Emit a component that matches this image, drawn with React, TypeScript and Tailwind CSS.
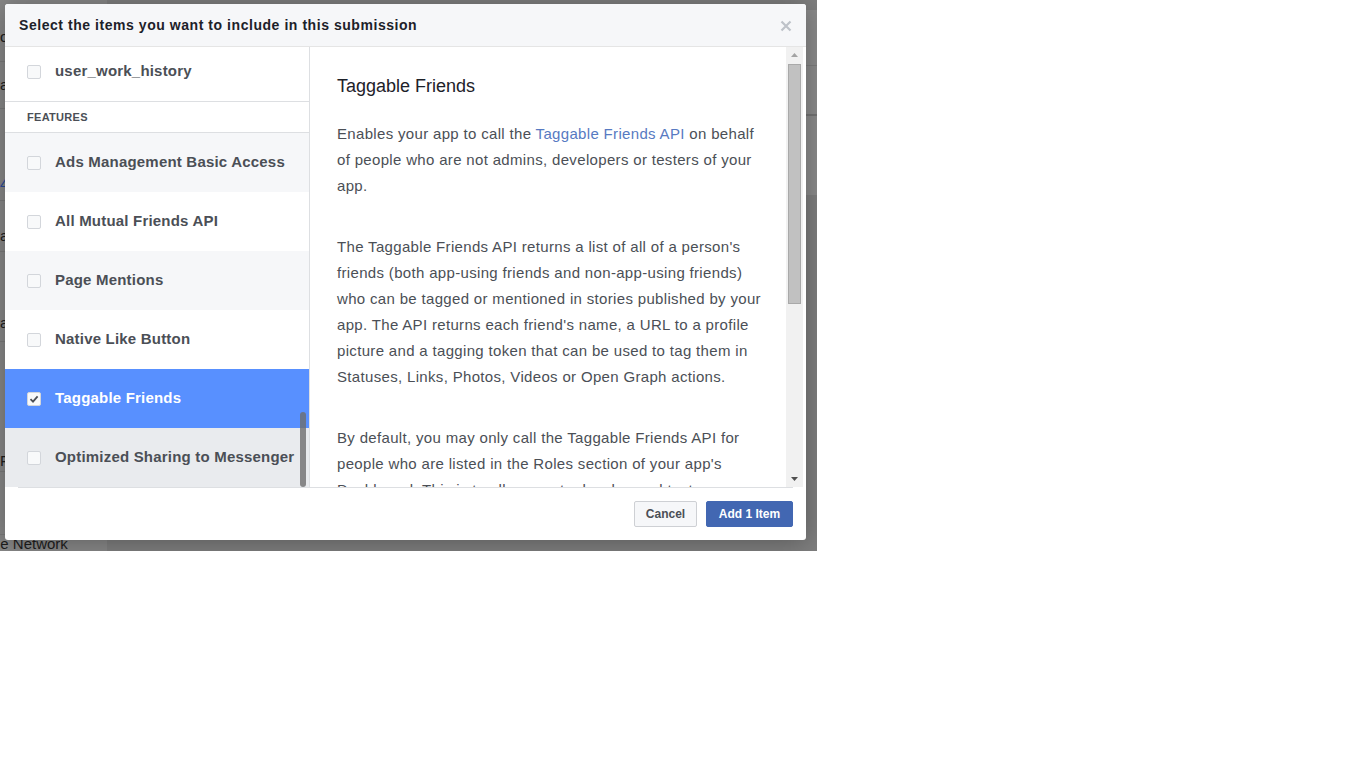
const features = [
  { name: 'Ads Management Basic Access', tone: 'bg-[#f6f7f9]' },
  { name: 'All Mutual Friends API', tone: 'bg-white' },
  { name: 'Page Mentions', tone: 'bg-[#f6f7f9]' },
  { name: 'Native Like Button', tone: 'bg-white' },
  { name: 'Taggable Friends', tone: 'bg-[#5890ff]', checked: true },
  { name: 'Optimized Sharing to Messenger', tone: 'bg-[#e9ebee]' },
]

function Checkbox({ checked }: { checked?: boolean }) {
  return (
    <span className="flex h-[14px] w-[14px] shrink-0 items-center justify-center rounded-[2px] border border-[#d3d6db] bg-[#f8f9fa]">
      {checked && (
        <svg width="10" height="10" viewBox="0 0 10 10">
          <path d="M1.5 5.2 L4 7.6 L8.6 2.4" fill="none" stroke="#4b4f56" strokeWidth="1.8" />
        </svg>
      )}
    </span>
  )
}

function Row({ name, tone, checked }: { name: string; tone: string; checked?: boolean }) {
  return (
    <div className={`flex h-[59px] shrink-0 items-center pl-[22px] ${tone}`}>
      <Checkbox checked={checked} />
      <span className={`ml-[14px] text-[15px] font-bold tracking-[0.2px] ${checked ? 'text-white' : 'text-[#4b4f56]'}`}>{name}</span>
    </div>
  )
}

function Scrollbar() {
  return (
    <div className="flex w-[17px] shrink-0 flex-col items-center bg-[#f1f1f1]">
      <svg width="17" height="17" viewBox="0 0 17 17" className="shrink-0">
        <path d="M5 10 L8.5 6 L12 10 Z" fill="#a3a3a3" />
      </svg>
      <div className="h-[240px] w-[13px] border border-[#a9a9a9] bg-[#c1c1c1]" />
      <div className="flex-1" />
      <svg width="17" height="17" viewBox="0 0 17 17" className="shrink-0">
        <path d="M5 7 L12 7 L8.5 11 Z" fill="#505050" />
      </svg>
    </div>
  )
}

export default function App() {
  return (
    <div className="h-[768px] w-full bg-white font-['Liberation_Sans',Arial,sans-serif]">
      <div className="relative h-[551px] w-[817px] overflow-hidden bg-[#7e7e7e]">
        {/* page behind the dialog */}
        <div className="flex h-full">
          <div className="flex w-[107px] flex-col bg-[#878787] text-[15px] text-[#1d1d1d]">
            <div className="h-[62px] border-b border-[#7a7a7a] pt-[26px]">o</div>
            <div className="h-[48px] border-b border-[#7a7a7a] pt-[12px]">a</div>
            <div className="h-[92px] border-b border-[#7a7a7a] pt-[64px] text-[#2a4a9a]">4</div>
            <div className="h-[52px] border-b border-[#7a7a7a] pt-[24px]">a</div>
            <div className="h-[90px] border-b border-[#7a7a7a] pt-[60px]">a</div>
            <div className="h-[130px] border-b border-[#7a7a7a] pt-[108px]">F</div>
            <div className="h-[64px] border-b border-[#7a7a7a]" />
            <div className="-ml-[8px] pt-[1px] leading-none">ne Network</div>
          </div>
          <div className="flex-1">
            <div className="ml-auto mt-[10px] h-[185px] w-[30px] bg-[#8a8a8a]">
              <div className="h-[56px] border-b border-[#7c7c7c]" />
              <div className="h-[50px] border-b-2 border-[#727272] pt-[16px] pl-[1px] text-[14px] font-bold text-[#1d2129]">s</div>
            </div>
          </div>
        </div>

        {/* dialog */}
        <div className="absolute left-[5px] top-[4px] flex h-[536px] w-[801px] flex-col overflow-hidden rounded-[3px] bg-white shadow-[0_2px_26px_rgba(0,0,0,0.3)]">
          <div className="flex h-[43px] shrink-0 items-center justify-between border-b border-[#e5e5e5] bg-[#f6f7f9] pl-[14px] pr-[14px]">
            <span className="text-[14px] font-bold tracking-[0.55px] text-[#1d2129]">Select the items you want to include in this submission</span>
            <svg width="12" height="12" viewBox="0 0 12 12" className="mt-[2px]">
              <path d="M1.5 1.5 L10.5 10.5 M10.5 1.5 L1.5 10.5" stroke="#bec2c9" strokeWidth="2.2" />
            </svg>
          </div>

          <div className="flex h-[440px] shrink-0">
            <div className="relative flex w-[305px] shrink-0 flex-col overflow-hidden border-r border-[#dddfe2]">
              <div className="-mt-[5px] flex h-[60px] shrink-0 items-center border-b border-[#dddfe2] pl-[22px]">
                <Checkbox />
                <span className="ml-[14px] text-[15px] font-bold tracking-[0.2px] text-[#4b4f56]">user_work_history</span>
              </div>
              <div className="flex h-[31px] shrink-0 items-center border-b border-[#dddfe2] pl-[22px] text-[11px] font-bold tracking-[0.3px] text-[#4b4f56]">
                FEATURES
              </div>
              {features.map((f) => (
                <Row key={f.name} {...f} />
              ))}
              <div className="absolute right-[3px] top-[365px] h-[75px] w-[6px] rounded-[3px] bg-[#6e6e6e]/80" />
            </div>

            <div className="flex flex-1">
              <div className="flex-1 overflow-hidden pl-[27px] pr-[22px] pt-[27px] text-[15px] leading-[26px] tracking-[0.33px] text-[#4b4f56]">
                <h2 className="text-[18px] leading-[24px] tracking-normal text-[#1d2129]">Taggable Friends</h2>
                <p className="mt-[23px]">
                  Enables your app to call the <span className="text-[#577ac2]">Taggable Friends API</span> on behalf of people who are not admins, developers or testers of your app.
                </p>
                <p className="mt-[35px]">
                  The Taggable Friends API returns a list of all of a person's friends (both app-using friends and non-app-using friends) who can be tagged or mentioned in stories published by your app. The API returns each friend's name, a URL to a profile picture and a tagging token that can be used to tag them in Statuses, Links, Photos, Videos or Open Graph actions.
                </p>
                <p className="mt-[35px]">
                  By default, you may only call the Taggable Friends API for people who are listed in the Roles section of your app's Dashboard. This is to allow you to develop and test your app before submitting it for review.
                </p>
              </div>
              <Scrollbar />
              <div className="w-[3px] shrink-0" />
            </div>
          </div>

          <div className="mx-[13px] flex flex-1 items-center justify-end gap-[9px] border-t border-[#dddfe2]">
            <button className="h-[26px] w-[63px] rounded-[2px] border border-[#ced0d4] bg-[#f6f7f9] text-[12px] font-bold text-[#4b4f56]">Cancel</button>
            <button className="h-[26px] w-[87px] rounded-[2px] border border-[#4267b2] bg-[#4267b2] text-[12px] font-bold text-white">Add 1 Item</button>
          </div>
        </div>
      </div>
    </div>
  )
}
